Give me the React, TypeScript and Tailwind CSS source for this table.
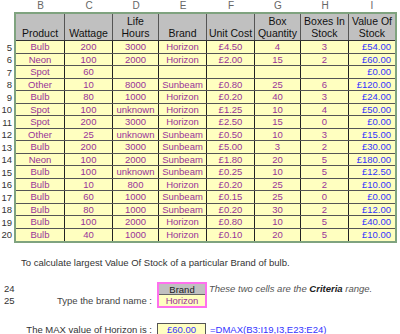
const cols = [
  { letter: 'B', w: 'w-[49px]' },
  { letter: 'C', w: 'w-[48px]' },
  { letter: 'D', w: 'w-[46px]' },
  { letter: 'E', w: 'w-[48px]' },
  { letter: 'F', w: 'w-[48px]' },
  { letter: 'G', w: 'w-[46px]' },
  { letter: 'H', w: 'w-[48px]' },
  { letter: 'I', w: 'w-[46px]' },
];

const headers = [
  ['Product'],
  ['Wattage'],
  ['Life', 'Hours'],
  ['Brand'],
  ['Unit Cost'],
  ['Box', 'Quantity'],
  ['Boxes In', 'Stock'],
  ['Value Of', 'Stock'],
];

const rows: string[][] = [
  ['Bulb', '200', '3000', 'Horizon', '£4.50', '4', '3', '£54.00'],
  ['Neon', '100', '2000', 'Horizon', '£2.00', '15', '2', '£60.00'],
  ['Spot', '60', '', '', '', '', '', '£0.00'],
  ['Other', '10', '8000', 'Sunbeam', '£0.80', '25', '6', '£120.00'],
  ['Bulb', '80', '1000', 'Horizon', '£0.20', '40', '3', '£24.00'],
  ['Spot', '100', 'unknown', 'Horizon', '£1.25', '10', '4', '£50.00'],
  ['Spot', '200', '3000', 'Horizon', '£2.50', '15', '0', '£0.00'],
  ['Other', '25', 'unknown', 'Sunbeam', '£0.50', '10', '3', '£15.00'],
  ['Bulb', '200', '3000', 'Sunbeam', '£5.00', '3', '2', '£30.00'],
  ['Neon', '100', '2000', 'Sunbeam', '£1.80', '20', '5', '£180.00'],
  ['Bulb', '100', 'unknown', 'Sunbeam', '£0.25', '10', '5', '£12.50'],
  ['Bulb', '10', '800', 'Horizon', '£0.20', '25', '2', '£10.00'],
  ['Bulb', '60', '1000', 'Sunbeam', '£0.15', '25', '0', '£0.00'],
  ['Bulb', '80', '1000', 'Sunbeam', '£0.20', '30', '2', '£12.00'],
  ['Bulb', '100', '2000', 'Horizon', '£0.80', '10', '5', '£40.00'],
  ['Bulb', '40', '1000', 'Horizon', '£0.10', '20', '5', '£10.00'],
];

export default function App() {
  return (
    <div className="w-[400px] h-[334px] overflow-hidden bg-white font-['Liberation_Sans',Arial,sans-serif] text-[#333]">
      {/* column letters */}
      <div className="flex h-[12px] pl-[16px] text-[10px] leading-[12px] text-[#666]">
        {cols.map((c) => (
          <div key={c.letter} className={`${c.w} text-center`}>
            {c.letter}
          </div>
        ))}
      </div>

      <div className="flex">
        {/* row numbers */}
        <div className="w-[14px] pt-[29px] text-[9.5px] text-[#333]">
          {rows.map((_, i) => (
            <div
              key={i}
              className={`${i % 2 === 0 ? 'h-[13px] leading-[13px]' : 'h-[12px] leading-[12px]'} text-right pr-[2px]`}
            >
              {i + 5}
            </div>
          ))}
        </div>

        {/* table */}
        <div className="border-2 border-[#7fa37f]">
          <div className="flex h-[27px] bg-[#c0c0c0] border-b border-[#333] text-[10.5px] leading-[12px] text-[#111]">
            {headers.map((h, j) => (
              <div
                key={j}
                className={`${cols[j].w} flex flex-col justify-end items-center pb-[1px] ${j < 7 ? 'border-r border-[#555]' : ''}`}
              >
                {h.map((line) => (
                  <div key={line} className="whitespace-nowrap">
                    {line}
                  </div>
                ))}
              </div>
            ))}
          </div>
          {rows.map((r, i) => (
            <div
              key={i}
              className={`flex bg-[#ffffc0] text-[9.5px] ${i % 2 === 0 ? 'h-[13px] leading-[12px]' : 'h-[12px] leading-[11px]'} ${i < rows.length - 1 ? 'border-b border-[#555]' : ''}`}
            >
              {r.map((v, j) => (
                <div
                  key={j}
                  className={`${cols[j].w} whitespace-nowrap ${j < 7 ? 'border-r border-[#222] text-center text-[#993399]' : 'text-right pr-[4px] text-[#3333ff]'}`}
                >
                  {v}
                </div>
              ))}
            </div>
          ))}
        </div>
      </div>

      <div className="mt-[14px] pl-[21px] h-[12px] text-[9.5px] leading-[12px] text-[#333]">
        To calculate largest Value Of Stock of a particular Brand of bulb.
      </div>

      {/* criteria range */}
      <div className="flex mt-[13px] text-[9.5px]">
        <div className="w-[157px] flex flex-col text-[#333]">
          <div className="h-[13px] leading-[14px] pl-[4px]">24</div>
          <div className="h-[13px] leading-[12px] flex justify-between pl-[4px] pr-[5px]">
            <span>25</span>
            <span className="text-[#444]">Type the brand name :</span>
          </div>
        </div>
        <div className="w-[50px] border-2 border-[#ff70ee]">
          <div className="h-[11px] leading-[11px] bg-[#c0c0c0] border-b border-[#666] text-center text-[#222]">
            Brand
          </div>
          <div className="h-[11px] leading-[11px] bg-[#ffffc0] text-center text-[#993399]">Horizon</div>
        </div>
        <div className="pl-[2px] pt-[1px] leading-[12px] italic text-[#555] whitespace-nowrap">
          These two cells are the <span className="font-bold text-[#222]">Criteria</span> range.
        </div>
      </div>

      {/* result */}
      <div className="flex mt-[15px] text-[9.5px]">
        <div className="w-[157px] text-right pr-[5px] leading-[14px] text-[#333]">The MAX value of Horizon is :</div>
        <div className="w-[49px] h-[14px] border border-[#555] bg-[#ffffc0] text-center leading-[12px] text-[#3333ff]">
          £60.00
        </div>
        <div className="pl-[4px] leading-[14px] text-[#3333ff] whitespace-nowrap">=DMAX(B3:I19,I3,E23:E24)</div>
      </div>
    </div>
  );
}
